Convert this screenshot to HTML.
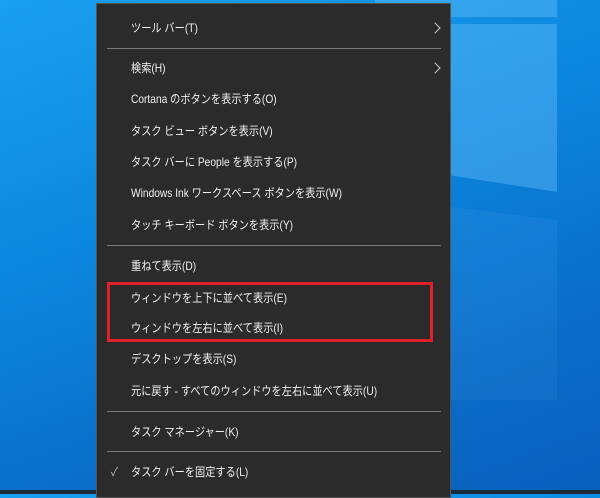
<!DOCTYPE html>
<html><head><meta charset="utf-8"><style>
body{margin:0;width:600px;height:494px;overflow:hidden;position:relative;
background:linear-gradient(160deg,#1aa0f0 0%,#0c86de 40%,#0a6cc8 75%,#0960bd 100%);
font-family:"Liberation Sans","Noto Sans CJK JP",sans-serif;}
.pane{position:absolute;background:rgba(120,200,255,.35);}
.menu{position:absolute;left:96px;top:3px;width:355px;height:495px;background:#2b2b2b;border:1px solid #555;box-sizing:border-box;}
.it{position:absolute;left:34px;color:#f0f0f0;font-size:12px;line-height:16px;white-space:nowrap;transform:scaleX(.85);transform-origin:0 0}
.sep{position:absolute;left:10px;width:334px;height:1px;background:#7a7a7a}
.chev{position:absolute;left:334px;width:7px;height:7px;border-right:1.3px solid #ccc;border-top:1.3px solid #ccc;transform:rotate(45deg)}
.red{position:absolute;left:107px;top:282px;width:326px;height:60px;border:3px solid #e0202a;box-sizing:border-box}
.tb{position:absolute;left:0;top:490px;width:600px;height:4px;background:#1c2a3a}
</style></head><body>
<div class="pane" style="left:375px;top:0;width:182px;height:17px"></div>
<div class="pane" style="left:395px;top:24px;width:162px;height:168px;clip-path:polygon(0 0,100% 0,100% 100%,0 85%)"></div>
<div class="pane" style="left:395px;top:200px;width:162px;height:200px;clip-path:polygon(0 0,100% 10%,100% 100%,0 100%);opacity:.25"></div>
<div class="tb"></div>
<div class="menu">
<div class="it" style="top:16px">ツール バー(T)</div><div class="chev" style="top:20px"></div>
<div class="sep" style="top:44px"></div>
<div class="it" style="top:56px">検索(H)</div><div class="chev" style="top:60px"></div>
<div class="it" style="top:87px">Cortana のボタンを表示する(O)</div>
<div class="it" style="top:119px">タスク ビュー ボタンを表示(V)</div>
<div class="it" style="top:150px">タスク バーに People を表示する(P)</div>
<div class="it" style="top:181px">Windows Ink ワークスペース ボタンを表示(W)</div>
<div class="it" style="top:213px">タッチ キーボード ボタンを表示(Y)</div>
<div class="sep" style="top:241px"></div>
<div class="it" style="top:254px">重ねて表示(D)</div>
<div class="it" style="top:286px">ウィンドウを上下に並べて表示(E)</div>
<div class="it" style="top:316px">ウィンドウを左右に並べて表示(I)</div>
<div class="it" style="top:347px">デスクトップを表示(S)</div>
<div class="it" style="top:379px">元に戻す - すべてのウィンドウを左右に並べて表示(U)</div>
<div class="sep" style="top:407px"></div>
<div class="it" style="top:420px">タスク マネージャー(K)</div>
<div class="sep" style="top:447px"></div>
<div class="it" style="top:460px;left:14px;color:#bbb">✓</div>
<div class="it" style="top:460px">タスク バーを固定する(L)</div>
</div>
<div class="red"></div>
</body></html>
